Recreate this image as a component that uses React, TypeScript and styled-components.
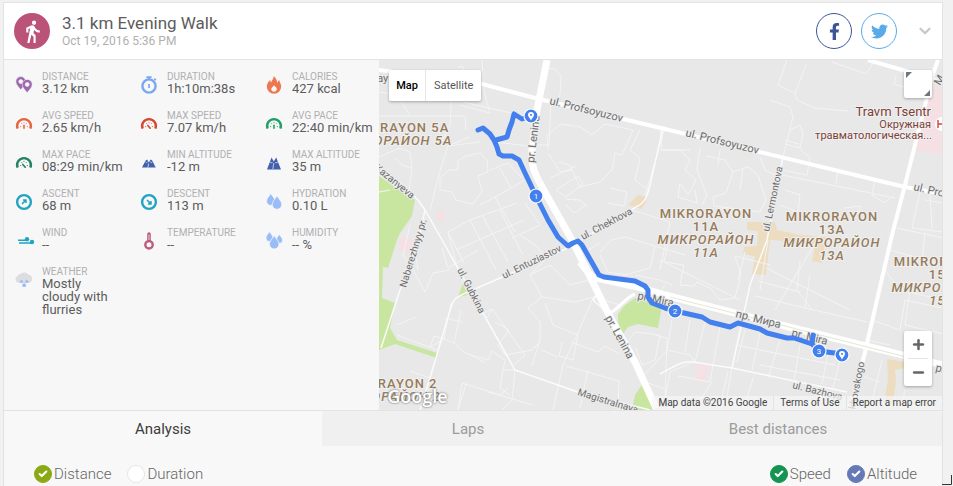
import React, { useState } from "react";
import styled, { createGlobalStyle } from "styled-components";
import { FaFacebookF, FaTwitter } from "react-icons/fa";
import { MdDirectionsWalk } from "react-icons/md";
import { ChevronDown, Check, Plus, Minus } from "lucide-react";

const GlobalStyle = createGlobalStyle`
  * { box-sizing: border-box; }
  body {
    margin: 0;
    background: #f1f1f1;
    font-family: Roboto, "Liberation Sans", sans-serif;
    color: #5c5c5c;
    overflow: hidden;
  }
  button { font-family: inherit; padding: 0; border: 0; cursor: pointer; }
`;

const Card = styled.main`
  margin: 2px 10px 0 3px;
  min-height: calc(100vh - 2px);
  background: #f8f8f8;
  border: 1px solid #e3e3e3;
  border-bottom: 0;
`;

const Header = styled.header`
  display: flex;
  align-items: center;
  height: 57px;
  padding: 0 8px 0 10px;
  background: #fff;
  border-bottom: 1px solid #e3e3e3;
`;

const ActivityBadge = styled.div`
  display: flex;
  align-items: center;
  justify-content: center;
  width: 36px;
  height: 36px;
  border-radius: 50%;
  background: #bb5378;
  color: #fff;
  font-size: 25px;
`;

const Heading = styled.div`
  flex: 1;
  margin-left: 12px;
`;

const Title = styled.h1`
  margin: 0;
  font-size: 17px;
  line-height: 20px;
  font-weight: 400;
  color: #5c5c5c;
`;

const DateLine = styled.div`
  font-size: 12px;
  line-height: 16px;
  color: #b0b0b0;
`;

const SocialLink = styled.a<{ $color: string }>`
  display: flex;
  align-items: center;
  justify-content: center;
  width: 36px;
  height: 36px;
  margin-left: 9px;
  border: 1px solid ${(p) => p.$color};
  border-radius: 50%;
  color: ${(p) => p.$color};
  font-size: 17px;
`;

const MenuButton = styled.button`
  display: flex;
  margin-left: 19px;
  background: none;
  color: #c8c8c8;
`;

const Body = styled.section`
  display: flex;
  height: 351px;
  border-bottom: 1px solid #e3e3e3;
`;

const Stats = styled.dl`
  display: grid;
  flex: 0 0 40%;
  grid-template-columns: 125px 125px 1fr;
  grid-auto-rows: minmax(39px, auto);
  align-content: start;
  margin: 0;
  padding: 10px 0 0 12px;
  background: #f7f7f8;
`;

const Stat = styled.div`
  display: grid;
  grid-template-columns: 16px 1fr;
  grid-template-rows: 12px auto;
  column-gap: 10px;
`;

const StatIcon = styled.svg`
  grid-row: 1 / 3;
  width: 18px;
  height: 18px;
  margin-top: 6px;
  overflow: visible;
`;

const StatLabel = styled.dt`
  font-size: 10px;
  line-height: 13px;
  color: #b0b0b0;
  white-space: nowrap;
`;

const StatValue = styled.dd<{ $wraps: boolean }>`
  margin: 0;
  max-width: ${(p) => (p.$wraps ? "72px" : "none")};
  white-space: ${(p) => (p.$wraps ? "normal" : "nowrap")};
  font-size: 13px;
  line-height: 13px;
`;

const MapPane = styled.div`
  position: relative;
  flex: 1;
  min-width: 0;
  overflow: hidden;
  background: #e8e8e8;
`;

const MapDrawing = styled.svg`
  display: block;
  width: 100%;
  height: 100%;
`;

const MapTypes = styled.div`
  position: absolute;
  top: 10px;
  left: 10px;
  display: flex;
  height: 31px;
  border-radius: 2px;
  background: #fff;
  box-shadow: 0 1px 3px rgba(0, 0, 0, 0.3);
`;

const MapTypeButton = styled.button<{ $active?: boolean }>`
  padding: ${(p) => (p.$active ? "0 7px" : "0 8px")};
  border-left: ${(p) => (p.$active ? "0" : "1px solid #e6e6e6")};
  background: none;
  font-size: 11px;
  font-weight: ${(p) => (p.$active ? 500 : 400)};
  color: ${(p) => (p.$active ? "#000" : "#565656")};
`;

const FullscreenButton = styled.button`
  position: absolute;
  top: 10px;
  right: 10px;
  width: 28px;
  height: 28px;
  border-radius: 2px;
  background: #fff;
  box-shadow: 0 1px 3px rgba(0, 0, 0, 0.3);
`;

const ZoomControls = styled.div`
  position: absolute;
  right: 10px;
  bottom: 24px;
  width: 28px;
  border-radius: 2px;
  background: #fff;
  box-shadow: 0 1px 3px rgba(0, 0, 0, 0.3);
`;

const ZoomButton = styled.button`
  display: flex;
  align-items: center;
  justify-content: center;
  width: 28px;
  height: 27px;
  background: none;
  color: #666;
`;

const ZoomRule = styled.div`
  height: 1px;
  margin: 0 4px;
  background: #e6e6e6;
`;

const Credits = styled.div`
  position: absolute;
  right: 0;
  bottom: 0;
  display: flex;
  height: 14px;
  background: rgba(245, 245, 245, 0.75);
  font-size: 10px;
  line-height: 14px;
  white-space: nowrap;
`;

const Credit = styled.span`
  padding: 0 6px;
  color: #444;
  & + & { border-left: 1px solid #e3e3e3; }
`;

const CreditLink = styled.a`
  color: inherit;
  text-decoration: none;
`;

const MapLogo = styled.div`
  position: absolute;
  left: 8px;
  bottom: 3px;
  font-family: "Open Sans", sans-serif;
  font-size: 18px;
  line-height: 22px;
  font-weight: 600;
  color: #fff;
  text-shadow: 0 0 2px #777, 0 0 2px #999;
`;

const Tabs = styled.div`
  display: flex;
  height: 35px;
`;

const Tab = styled.button<{ $share: number; $active: boolean }>`
  flex: ${(p) => p.$share} 1 0;
  border-radius: 3px 3px 0 0;
  background: ${(p) => (p.$active ? "#f8f8f8" : "#f0f0f0")};
  color: ${(p) => (p.$active ? "#3c3c3c" : "#9b9b9b")};
  font-size: 15px;
`;

const Series = styled.div`
  display: flex;
  justify-content: space-between;
  padding: 18px 25px 0 30px;
`;

const SeriesGroup = styled.div`
  display: flex;
  gap: 16px;
`;

const Option = styled.label`
  display: flex;
  align-items: center;
  gap: 2px;
  font-size: 15px;
  line-height: 20px;
  font-weight: 300;
  color: #666;
  cursor: pointer;
`;

const OptionInput = styled.input<{ $color: string }>`
  appearance: none;
  grid-area: 1 / 1;
  width: 18px;
  height: 18px;
  margin: 0;
  border: 1px solid #e6e6e6;
  border-radius: 50%;
  background: #fff;
  &:checked { background: ${(p) => p.$color}; border-color: ${(p) => p.$color}; }
`;

const OptionMark = styled.span`
  display: grid;
  place-items: center;
  color: #fff;
  svg { grid-area: 1 / 1; pointer-events: none; z-index: 1; }
`;

const CornerMark = styled.svg`
  position: fixed;
  right: 0;
  bottom: 0;
  width: 11px;
  height: 12px;
`;

const drop = (x: number, y: number, r: number, fill: string) => (
  <path
    key={`${x}-${y}`}
    d={`M${x} ${y - 1.8 * r}C${x + 0.5 * r} ${y - r} ${x + r} ${y - 0.6 * r} ${x + r} ${y}A${r} ${r} 0 0 1 ${x - r} ${y}C${x - r} ${y - 0.6 * r} ${x - 0.5 * r} ${y - r} ${x} ${y - 1.8 * r}Z`}
    fill={fill}
    stroke="#f7f7f8"
    strokeWidth="0.8"
  />
);

const gauge = (color: string, dx: number) => (
  <>
    <path d="M1.6 13.6A6.9 6.9 0 1 1 14.4 13.6" fill="none" stroke={color} strokeWidth="2.4" />
    <path d="M4 11.6h1.2M5.3 8.2l.9.9M8 6.8v1.2M10.7 8.2l-.9.9M12 11.6h-1.2" stroke={color} strokeWidth="0.8" />
    <path d={`M${8 - dx / 2} 13.2L${8 + dx / 2} 10.4`} stroke={color} strokeWidth="1.6" strokeLinecap="round" />
  </>
);

const pin = (x: number, y: number) => (
  <path
    fillRule="evenodd"
    d={`M${x} ${y + 8}C${x - 2} ${y + 5} ${x - 5} ${y + 3} ${x - 5} ${y - 0.4}A5 5 0 0 1 ${x + 5} ${y - 0.4}C${x + 5} ${y + 3} ${x + 2} ${y + 5} ${x} ${y + 8}ZM${x - 2} ${y - 0.4}a2 2 0 0 0 4 0a2 2 0 0 0 -4 0Z`}
    fill="#9c68ae"
    stroke="#f7f7f8"
    strokeWidth="0.6"
  />
);

const compass = (arrow: string) => (
  <>
    <circle cx="8" cy="9" r="6.9" fill="none" stroke="#21a4c3" strokeWidth="2.4" />
    <path d={arrow} fill="none" stroke="#21a4c3" strokeWidth="1.5" />
  </>
);

type StatItem = { label: string; value: string; wraps?: boolean; icon: React.ReactNode };

const stats: StatItem[] = [
  { label: "DISTANCE", value: "3.12 km", icon: <>{pin(4.8, 6)}{pin(11.2, 8.8)}</> },
  {
    label: "DURATION",
    value: "1h:10m:38s",
    icon: (
      <>
        <circle cx="8" cy="10" r="6.6" fill="none" stroke="#7aa7ef" strokeWidth="2.4" />
        <path d="M5.4 1.2h5.2M8 1v3M13.2 2.6l1.6 1.5M8 8v4" stroke="#7aa7ef" strokeWidth="1.7" />
      </>
    ),
  },
  {
    label: "CALORIES",
    value: "427 kcal",
    icon: (
      <>
        <path d="M7.5 0C8 3 5.5 4 5.2 6.8C4.6 6 4.3 4.8 4.2 4C2 6 .8 8.2 .8 10.6A7.2 7.2 0 0 0 15.2 10.6C15.2 8 13.5 6.5 13.2 4C12 5 11.6 6.3 11.4 7.2C10.8 4.2 10.2 1.8 7.5 0Z" fill="#ed7850" />
        <path d="M8 9.2C9 10.8 10.8 11 10.8 12.8A2.8 2.8 0 0 1 5.2 12.8C5.2 11.3 7.2 11 8 9.2Z" fill="#f7f7f8" />
      </>
    ),
  },
  { label: "AVG SPEED", value: "2.65 km/h", icon: gauge("#e3663f", 0) },
  { label: "MAX SPEED", value: "7.07 km/h", icon: gauge("#d5492f", -2.4) },
  { label: "AVG PACE", value: "22:40 min/km", icon: gauge("#1da164", 0) },
  { label: "MAX PACE", value: "08:29 min/km", icon: gauge("#238260", -2.4) },
  {
    label: "MIN ALTITUDE",
    value: "-12 m",
    icon: (
      <>
        <path d="M1 13.5L4.6 6.5L6.2 5.5L7.8 8.5L9.6 5.5L11.2 6.5L14.7 13.5Z" fill="#4360ad" />
        <path d="M4.4 7.8l1.1.8 1-.8M9.2 7.8l1 .8 1.2-.8M7.6 9.5l-.7 4" stroke="#f7f7f8" strokeWidth="0.7" fill="none" />
      </>
    ),
  },
  {
    label: "MAX ALTITUDE",
    value: "35 m",
    icon: (
      <>
        <path d="M1 15.5L5.5 3.5L7.8 7.5L10.2 3.5L15 15.5Z" fill="#4360ad" />
        <path d="M4 8l1.5 1 1-1M9.2 8l1 1 1.7-1M7.8 9l-1 6" stroke="#f7f7f8" strokeWidth="0.7" fill="none" />
      </>
    ),
  },
  { label: "ASCENT", value: "68 m", icon: compass("M6 11L9.6 7.4M7 7h3v3") },
  { label: "DESCENT", value: "113 m", icon: compass("M6 7L9.6 10.6M10 8v3H7") },
  { label: "HYDRATION", value: "0.10 L", icon: <>{drop(4.8, 8.2, 4.3, "#9bbdf7")}{drop(11, 11.5, 4.8, "#9bbdf7")}</> },
  {
    label: "WIND",
    value: "--",
    icon: (
      <>
        <path d="M2 8.3h10M3 11h13" stroke="#21a4c3" strokeWidth="1.6" />
        <circle cx="11" cy="7.3" r="2.2" fill="#21a4c3" />
        <circle cx="16" cy="10" r="2.2" fill="#21a4c3" />
      </>
    ),
  },
  {
    label: "TEMPERATURE",
    value: "--",
    icon: (
      <>
        <path d="M8 2v9" stroke="#bb5b7d" strokeWidth="3.6" strokeLinecap="round" />
        <path d="M8 2.5v8" stroke="#e3b9c7" strokeWidth="1.2" />
        <circle cx="8" cy="12.8" r="3.7" fill="#f7f7f8" stroke="#bb5b7d" strokeWidth="2.4" />
      </>
    ),
  },
  {
    label: "HUMIDITY",
    value: "-- %",
    icon: <>{drop(3.5, 6, 3.6, "#9bbdf7")}{drop(13.3, 8.2, 3.3, "#9bbdf7")}{drop(8.2, 12.2, 4.8, "#9bbdf7")}</>,
  },
  {
    label: "WEATHER",
    value: "Mostly cloudy with flurries",
    wraps: true,
    icon: (
      <>
        <path d="M3.5 12A3.7 3.7 0 0 1 1.3 5.2A4 4 0 0 1 5 2.7A5 5 0 0 1 12.2 3.5A4.4 4.4 0 0 1 13.2 12Z" fill="#dcdde0" />
        <g fill="#9bbdf7">
          <circle cx="5.5" cy="10.5" r="1.5" />
          <circle cx="10.8" cy="10.5" r="1.5" />
          <circle cx="8.2" cy="14.2" r="1.9" />
        </g>
      </>
    ),
  },
];

const parks = [
  "379,176 395,187 415,200 412,216 400,233 397,240 388,268 383,267 382,298 395,303 390,328 397,340 437,353 437,358 395,344 379,350",
  "618,314 624,306 635,298 662,305 658,328 638,324 628,327 622,335 618,322",
  "643,383 654,410 632,410 635,395",
  "463,283 467,295 458,297",
];

const commercial = [
  "628,205 638,195 647,197 645,204 641,209",
  "747,222 775,222 777,230 800,235 826,237 822,263 812,261 815,246 775,240 770,240 766,275 752,274 755,256 743,254 744,247 757,246 758,231 747,230",
  "887,359 905,362 904,368 895,370 896,382 893,404 884,404 888,380",
];

const hospitals = [
  "933,88 943,85 943,155 914,150 925,105",
  "438,210 446,212 443,222 436,220",
  "400,237 413,238 411,254 399,250",
  "698,362 708,364 706,382 696,380",
];

const lanes = [
  // north-west quarter
  "M379 92L400 95L440 88L482 84M482 60L483 83M458 68L462 66L468 78M460 105L490 113L482 84M379 116L465 116L466 130M452 88L450 125L440 145M400 100L410 115M463 102L533 118M494 142L530 146M379 157L400 148L410 152L412 168L402 165L395 158M412 168L409 190M470 137L448 146L440 171L430 210M448 146L480 142",
  "M440 178L449 170L458 170L458 161L466 156L480 153L487 160L488 172L478 176L482 191L473 204L456 200L452 192L440 190L440 178M490 170L508 163L522 178M500 168L511 188L525 180M511 188L495 197L515 232M495 197L480 205M517 203L470 220L496 270M470 220L448 232L464 263M482 215L508 262M525 203L540 225L512 238M456 250L524 220M500 210L523 255",
  "M542 68L555 69L561 76L560 95L555 103M551 98L549 145L535 145M548 150L547 135L561 124L580 127L592 135L605 124L633 130L622 155L615 153L612 170L600 182L580 187L572 170L560 172L548 153M572 170L570 165L558 162M550 178L576 166M556 190L578 176L583 184L566 197L556 190M566 199L580 200L586 205L574 213L566 205M640 130L630 150L640 158L635 180L648 190M610 188L627 192L624 206L608 203",
  // south-west quarter
  "M379 192L390 190M410 225L403 255L413 270L425 292L433 273L450 270M426 218L415 250L418 270M442 248L448 268L478 250M448 232L455 260L463 283M451 303L444 339L454 343L461 310M445 318L462 322M444 339L430 347L434 336L444 339M396 325L416 317M397 335L437 350M486 320L492 309L525 355L514 365M492 309L480 315M495 322L509 330L498 345L505 355L532 350L540 342M454 343L465 353L488 360L492 351L505 360L503 370L515 370L512 400L502 410M470 355L484 362M503 370L500 388L510 395M458 410L462 383L532 405M487 392L500 395L508 388M466 384L458 410M430 378L410 371",
  "M520 235L538 247L545 260L530 275L542 297L575 302L594 297L600 288M542 297L528 308L540 322L540 340L532 366M545 303L553 325L578 335L573 360L559 356L562 342M593 298L577 335L563 365L553 410M571 342L598 352L605 346L620 354M566 366L619 381L618 410M555 384L578 393M588 370L580 408M541 350L558 357M580 255L600 243M594 297L620 305M530 275L550 265L570 285L596 278",
  // centre
  "M600 252L611 240L625 237L655 246L650 268L625 275L608 272L600 255M632 210L670 222L660 270M655 246L685 255M665 128L645 195M660 150L690 150M625 345L635 332L660 335L655 360L642 365L636 348M655 335L667 338L665 400M640 380L667 390M635 275L660 280L672 285",
  "M660 260L700 280L740 300M668 245L664 262L684 265L680 285L694 286L697 282L710 288L720 300L735 298L741 275L735 256M735 256L770 265M745 252L738 280M665 285L660 293M768 240L760 290M758 281L800 292M755 296L805 308L810 275M766 268L850 310M800 260L797 290L812 310M805 308L867 322M775 310L820 235",
  // north-centre
  "M787 60L778 85L795 93L806 65M795 93L797 100L815 108L848 111M770 100L790 107L793 117L783 157M832 62L866 74L874 62M896 76L894 84L913 90M790 130L800 125L803 134L800 148L785 144M785 140L799 144M797 146L810 158L807 175L782 170M838 170L836 184M875 180L872 195L885 203L890 198M782 175L895 198M785 190L800 195L798 212L780 205M844 208L860 206L858 214",
  "M660 128L662 150L680 150L690 160L685 170L696 180L688 195L680 183L678 197L697 203L695 190M700 148L697 170L707 195L702 205M706 156L725 160L733 172L726 193L713 197L714 206L760 212L766 200L758 175L748 167L733 172M720 150L718 165M743 168L740 190M760 157L765 170L775 175",
  // south-centre
  "M672 320L667 350L690 355L695 362M667 350L640 380M690 320L685 352M693 362L670 372L665 400M705 322L695 362M720 327L710 382L678 376M745 330L737 362M760 333L752 370M780 340L768 378M735 345L835 365M728 372L720 405M732 368L727 396M800 345L794 380M840 360L833 388M828 353L822 384M760 365L840 380M753 378L743 410M700 400L712 382",
  // east edge
  "M917 187L943 196M920 192L912 228L943 232M925 200L943 203M930 195L932 228M897 228L943 238M890 250L943 265M885 270L900 290L943 300M872 320L900 330L905 300L943 308M867 340L890 345M882 360L870 410M925 232L922 262M910 290L905 325L943 334M905 390L900 410M860 375L880 382",
];

const streets = [
  "M379 170C397 178 406 188 418 200L425 210L442 240L515 370L575 391L650 410",
  "M425 210L415 255L400 290L381 348",
  "M420 410L430 378L451 307C453 298 458 296 475 289L568 248L636 207C645 203 647 197 650 185L663 128",
  "M783 157L767 240L750 285L732 368",
  "M660 374C675 366 683 360 693 362L732 368L847 392",
  "M608 313L593 300L600 290",
];

const avenues = [
  { d: "M379 70L482 84L535 98L665 129L760 152L905 187L943 194", w: 4 },
  { d: "M547 60L537 110L532 150C530 165 536 176 542 187L572 240L608 313L635 362L656 408", w: 7 },
  { d: "M580 262L592 277L642 288L665 295L793 328L943 365", w: 7 },
  { d: "M938 60L932 77L905 185L892 235L865 352L853 400", w: 4 },
  { d: "M868 60L913 73L943 83", w: 4 },
  { d: "M610 313C620 308 625 298 635 294", w: 3 },
];

const streetNames: { t: string; x: number; y: number; a: number; s?: number }[] = [
  { t: "bay", x: 371, y: 82, a: 0 },
  { t: "ul. Profsoyuzov", x: 549, y: 104, a: 14 },
  { t: "ul. Profsoyuzov", x: 685, y: 136, a: 14 },
  { t: "ul. Profsoyuzov", x: 913, y: 190, a: 13 },
  { t: "pr. Lenina", x: 534, y: 163, a: -83 },
  { t: "Kazanyeva", x: 374, y: 169, a: 39, s: 10 },
  { t: "Naberezhnyy pr.", x: 406, y: 288, a: -73, s: 10 },
  { t: "ul. Gubkina", x: 457, y: 270, a: 63, s: 10 },
  { t: "ul. Entuziastov", x: 504, y: 279, a: -26, s: 10 },
  { t: "ul. Chekhova", x: 583, y: 240, a: -28, s: 10 },
  { t: "ul. Lermontova", x: 769, y: 232, a: -78, s: 10 },
  { t: "pr. Lenina", x: 605, y: 318, a: 61 },
  { t: "pr. Mira", x: 637, y: 299, a: 12 },
  { t: "пр. Мира", x: 735, y: 317, a: 14 },
  { t: "pr. Mira", x: 791, y: 336, a: 14 },
  { t: "pr. Mira", x: 935, y: 371, a: 13 },
  { t: "ul. Bazhova", x: 792, y: 388, a: 14, s: 10 },
  { t: "Magistralnaya", x: 577, y: 395, a: 17, s: 10 },
  { t: "ul. Stakhovskogo", x: 850, y: 437, a: -79, s: 10 },
  { t: "M", x: 658, y: 407, a: 0 },
  { t: "M", x: 940, y: 86, a: -60 },
];

const StreetName = styled.text`
  fill: #6c6c6c;
  stroke: #ececec;
  stroke-width: 2px;
  paint-order: stroke;
`;

const DistrictName = styled.text<{ $italic?: boolean }>`
  fill: #967b5b;
  stroke: #f0f0f0;
  stroke-width: 2px;
  paint-order: stroke;
  font-size: 13px;
  font-weight: 500;
  font-style: ${(p) => (p.$italic ? "italic" : "normal")};
  letter-spacing: 1px;
  text-anchor: middle;
`;

const PlaceName = styled.text<{ $size: number }>`
  fill: #7d4138;
  stroke: #f0f0f0;
  stroke-width: 2px;
  paint-order: stroke;
  font-size: ${(p) => p.$size}px;
  text-anchor: end;
`;

const districts: { x: number; y: number; t: string; italic?: boolean }[] = [
  { x: 392, y: 132, t: "MIKRORAYON 5A" },
  { x: 393, y: 145, t: "МИКРОРАЙОН 5A", italic: true },
  { x: 706, y: 218, t: "MIKRORAYON" },
  { x: 706, y: 231, t: "11A" },
  { x: 706, y: 244, t: "МИКРОРАЙОН", italic: true },
  { x: 706, y: 257, t: "11A", italic: true },
  { x: 832, y: 221, t: "MIKRORAYON" },
  { x: 832, y: 234, t: "13A" },
  { x: 832, y: 247, t: "МИКРОРАЙОН", italic: true },
  { x: 832, y: 260, t: "13A", italic: true },
  { x: 940, y: 266, t: "MIKRORAYON" },
  { x: 942, y: 279, t: "15A" },
  { x: 940, y: 292, t: "МИКРОРАЙОН", italic: true },
  { x: 942, y: 305, t: "15A", italic: true },
  { x: 385, y: 388, t: "MIKRORAYON 2" },
  { x: 386, y: 401, t: "МИКРОРАЙОН 2", italic: true },
];

const route =
  "M531 116L522 119L514 114L512 122L509 130L507 137L496 140M478 130L483 128L490 134L494 140L497 147L499 154L503 156L512 156L519 160L525 173L536 196L548 220L558 237L568 246L573 243L578 241L582 245L599 275L604 277L635 281L645 286L648 290L648 297L652 303L665 308L675 311L702 317L710 322L730 327L738 323L760 329L767 333L787 338L794 338L812 344L813 335M812 344L819 351L842 354";

const stops: { x: number; y: number; n?: string }[] = [
  { x: 531, y: 116 },
  { x: 536, y: 196, n: "1" },
  { x: 675, y: 311, n: "2" },
  { x: 819, y: 351, n: "3" },
  { x: 842, y: 355 },
];

function CityMap() {
  return (
    <MapDrawing viewBox="379 60 563 350" preserveAspectRatio="xMinYMin slice" role="img" aria-label="Route map">
      <g fill="#c8e6a0">{parks.map((p) => <polygon key={p} points={p} />)}</g>
      <g fill="#f5e0e4">{hospitals.map((p) => <polygon key={p} points={p} />)}</g>
      <g fill="#ecdcc0">{commercial.map((p) => <polygon key={p} points={p} />)}</g>
      <g fill="none" stroke="#f4f4f4" strokeWidth="1" strokeLinejoin="round">
        {lanes.map((d) => <path key={d} d={d} />)}
      </g>
      <g fill="none" stroke="#fbfbfb" strokeWidth="1.5" strokeLinejoin="round">
        {streets.map((d) => <path key={d} d={d} />)}
      </g>
      <g fill="none" stroke="#fff" strokeLinejoin="round">
        {avenues.map((r) => <path key={r.d} d={r.d} strokeWidth={r.w} />)}
      </g>
      <path d="M670 297L793 328L910 358" fill="none" stroke="#e6e6d2" strokeWidth="1" />
      {streetNames.map((s, i) => (
        <StreetName key={i} fontSize={s.s ?? 11} transform={`translate(${s.x} ${s.y}) rotate(${s.a})`}>
          {s.t}
        </StreetName>
      ))}
      <path d={route} fill="none" stroke="#4380ee" strokeWidth="5" strokeLinejoin="round" strokeLinecap="round" />
      {districts.map((d, i) => (
        <DistrictName key={i} x={d.x} y={d.y} $italic={d.italic}>{d.t}</DistrictName>
      ))}
      <PlaceName x="931" y="116" $size={13}>Travm Tsentr</PlaceName>
      <PlaceName x="931" y="128" $size={11}>Окружная</PlaceName>
      <PlaceName x="932" y="139" $size={11}>травматологическая...</PlaceName>
      <circle cx="942" cy="124" r="7" fill="#fff" />
      <path d="M938 120v8M938 124h5" stroke="#d1453f" strokeWidth="1.4" />
      {stops.map((s) => (
        <g key={s.x}>
          <circle cx={s.x} cy={s.y} r="7" fill="#4380ee" stroke="#fff" strokeWidth="1.2" />
          {s.n ? (
            <text x={s.x} y={s.y + 3} fontSize="8" fill="#fff" textAnchor="middle">{s.n}</text>
          ) : (
            <path
              fillRule="evenodd"
              d={`M${s.x} ${s.y + 4.5}C${s.x - 1} ${s.y + 2} ${s.x - 3} ${s.y + 1} ${s.x - 3} ${s.y - 1}A3 3 0 0 1 ${s.x + 3} ${s.y - 1}C${s.x + 3} ${s.y + 1} ${s.x + 1} ${s.y + 2} ${s.x} ${s.y + 4.5}ZM${s.x - 1} ${s.y - 1}a1 1 0 0 0 2 0a1 1 0 0 0 -2 0Z`}
              fill="#fff"
            />
          )}
        </g>
      ))}
    </MapDrawing>
  );
}

type SeriesOptionProps = { label: string; color: string; type: "radio" | "checkbox"; checked?: boolean };

function SeriesOption({ label, color, type, checked }: SeriesOptionProps) {
  return (
    <Option>
      <OptionMark>
        <OptionInput type={type} name={type === "radio" ? "axis" : label} defaultChecked={checked} $color={color} />
        <Check size={10} strokeWidth={5} />
      </OptionMark>
      {label}
    </Option>
  );
}

const tabs = [
  { name: "Analysis", share: 318 },
  { name: "Laps", share: 292 },
  { name: "Best distances", share: 328 },
];

export default function App() {
  const [active, setActive] = useState("Analysis");
  return (
    <>
      <GlobalStyle />
      <Card>
        <Header>
          <ActivityBadge><MdDirectionsWalk /></ActivityBadge>
          <Heading>
            <Title>3.1 km Evening Walk</Title>
            <DateLine>Oct 19, 2016 5:36 PM</DateLine>
          </Heading>
          <SocialLink href="#facebook" aria-label="Share on Facebook" $color="#3c5498"><FaFacebookF /></SocialLink>
          <SocialLink href="#twitter" aria-label="Share on Twitter" $color="#58abe8"><FaTwitter /></SocialLink>
          <MenuButton aria-label="More"><ChevronDown size={18} strokeWidth={3} /></MenuButton>
        </Header>
        <Body>
          <Stats>
            {stats.map((s) => (
              <Stat key={s.label}>
                <StatIcon viewBox="0 0 18 18" aria-hidden="true">{s.icon}</StatIcon>
                <StatLabel>{s.label}</StatLabel>
                <StatValue $wraps={Boolean(s.wraps)}>{s.value}</StatValue>
              </Stat>
            ))}
          </Stats>
          <MapPane>
            <CityMap />
            <MapTypes>
              <MapTypeButton $active>Map</MapTypeButton>
              <MapTypeButton>Satellite</MapTypeButton>
            </MapTypes>
            <FullscreenButton aria-label="Full screen">
              <svg width="28" height="28" viewBox="0 0 28 28" fill="#6b7780">
                <path d="M2 2h6L2 8ZM26 26h-6L26 20Z" />
              </svg>
            </FullscreenButton>
            <ZoomControls>
              <ZoomButton aria-label="Zoom in"><Plus size={15} strokeWidth={4} /></ZoomButton>
              <ZoomRule />
              <ZoomButton aria-label="Zoom out"><Minus size={15} strokeWidth={4} /></ZoomButton>
            </ZoomControls>
            <MapLogo>Google</MapLogo>
            <Credits>
              <Credit>Map data ©2016 Google</Credit>
              <Credit><CreditLink href="#terms">Terms of Use</CreditLink></Credit>
              <Credit><CreditLink href="#report">Report a map error</CreditLink></Credit>
            </Credits>
          </MapPane>
        </Body>
        <Tabs role="tablist">
          {tabs.map((t) => (
            <Tab
              key={t.name}
              role="tab"
              aria-selected={t.name === active}
              $share={t.share}
              $active={t.name === active}
              onClick={() => setActive(t.name)}
            >
              {t.name}
            </Tab>
          ))}
        </Tabs>
        <Series>
          <SeriesGroup>
            <SeriesOption type="radio" label="Distance" color="#8aa914" checked />
            <SeriesOption type="radio" label="Duration" color="#8aa914" />
          </SeriesGroup>
          <SeriesGroup>
            <SeriesOption type="checkbox" label="Speed" color="#149450" checked />
            <SeriesOption type="checkbox" label="Altitude" color="#6679b7" checked />
          </SeriesGroup>
        </Series>
      </Card>
      <CornerMark viewBox="0 0 11 12" aria-hidden="true">
        <path d="M0 10.5h9.5V1" fill="none" stroke="#333" />
      </CornerMark>
    </>
  );
}
